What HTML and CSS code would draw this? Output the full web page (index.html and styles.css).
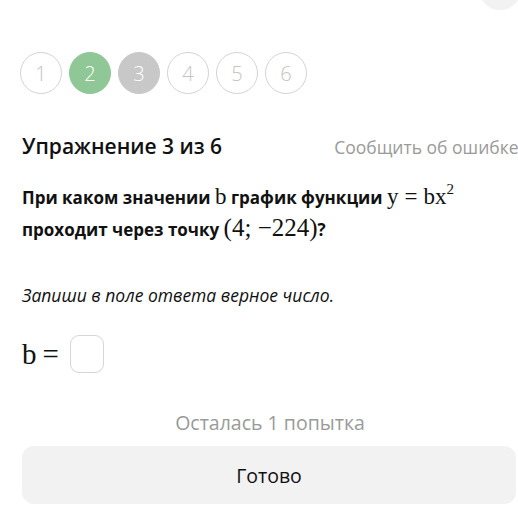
FILE: index.html
```html
<!DOCTYPE html>
<html>
<head>
    <meta charset="UTF-8" />
    <title>Упражнение 3 из 6</title>
    <link rel="stylesheet" href="styles.css">
</head>
<body>
    <div class="top-bar">
        <div class="close-btn"></div>
    </div>

    <div class="steps">
        <div class="step">1</div>
        <div class="step done">2</div>
        <div class="step current">3</div>
        <div class="step">4</div>
        <div class="step">5</div>
        <div class="step">6</div>
    </div>

    <div class="title-row">
        <h2>Упражнение 3 из 6</h2>
        <a href="#" class="report">Сообщить об ошибке</a>
    </div>

    <p class="question">
        При каком значении <span class="math">b</span> график функции
        <span class="math">y<span class="op">=</span>bx<sup>2</sup></span><br>
        проходит через точку <span class="math big">(4;&nbsp;&minus;224)</span>?
    </p>

    <p class="hint">Запиши в поле ответа верное число.</p>

    <div class="answer">
        <span class="math">b<span class="op">=</span></span>
        <span class="answer-box"></span>
    </div>

    <div class="attempts">Осталась 1 попытка</div>

    <button class="done-btn">Готово</button>
</body>
</html>
```

FILE: styles.css
```css
* {
    margin: 0;
    padding: 0;
    box-sizing: border-box;
}
body {
    font-family: "Open Sans", "Noto Sans", sans-serif;
    background-color: white;
    color: #111;
    padding-left: 22px;
    width: 518px;
    overflow: hidden;
}
.top-bar {
    height: 10px;
    position: relative;
    overflow: hidden;
}
.close-btn {
    position: absolute;
    right: -3px;
    bottom: 0;
    width: 42px;
    height: 42px;
    border-radius: 50%;
    background-color: #f2f2f2;
}
.steps {
    display: flex;
    gap: 7px;
    margin-top: 42px;
    margin-left: -2px;
}
.step {
    width: 42px;
    height: 42px;
    border: 1.5px solid #d4d4d4;
    border-radius: 50%;
    display: flex;
    align-items: center;
    justify-content: center;
    font-size: 20px;
    font-weight: 300;
    color: #c4c4c4;
}
.step.done {
    background-color: #8fc796;
    border-color: #8fc796;
    color: white;
}
.step.current {
    background-color: #c8c8c8;
    border-color: #c8c8c8;
    color: white;
}
.title-row {
    display: flex;
    align-items: baseline;
    gap: 112px;
    margin-top: 38px;
    white-space: nowrap;
}
h2 {
    font-size: 21px;
    font-weight: 600;
}
.report {
    font-size: 17.5px;
    color: #9a9a9a;
    text-decoration: none;
}
.question {
    margin-top: 22px;
    font-size: 17px;
    font-weight: 700;
    line-height: 30px;
}
.math {
    font-family: "Liberation Serif", "DejaVu Serif", serif;
    font-weight: 400;
    font-size: 23px;
}
.math .op {
    margin: 0 6px;
}
.math sup {
    font-size: 15px;
    vertical-align: 10px;
    line-height: 0;
}
.math.big {
    font-size: 25px;
}
.hint {
    margin-top: 38px;
    font-size: 17.5px;
    font-style: italic;
}
.answer {
    display: flex;
    align-items: center;
    gap: 5px;
    margin-top: 28px;
}
.answer .math {
    font-size: 29px;
}
.answer-box {
    width: 34px;
    height: 38px;
    border: 1.5px solid #d6d6d6;
    border-radius: 9px;
}
.attempts {
    margin-top: 36px;
    text-align: center;
    font-size: 19.5px;
    color: #9a9a9a;
}
.done-btn {
    display: block;
    width: 494px;
    height: 58px;
    margin-top: 10px;
    border: none;
    border-radius: 12px;
    background-color: #f2f2f2;
    font-family: "Open Sans", "Noto Sans", sans-serif;
    font-size: 19.5px;
    color: #111;
}
```
